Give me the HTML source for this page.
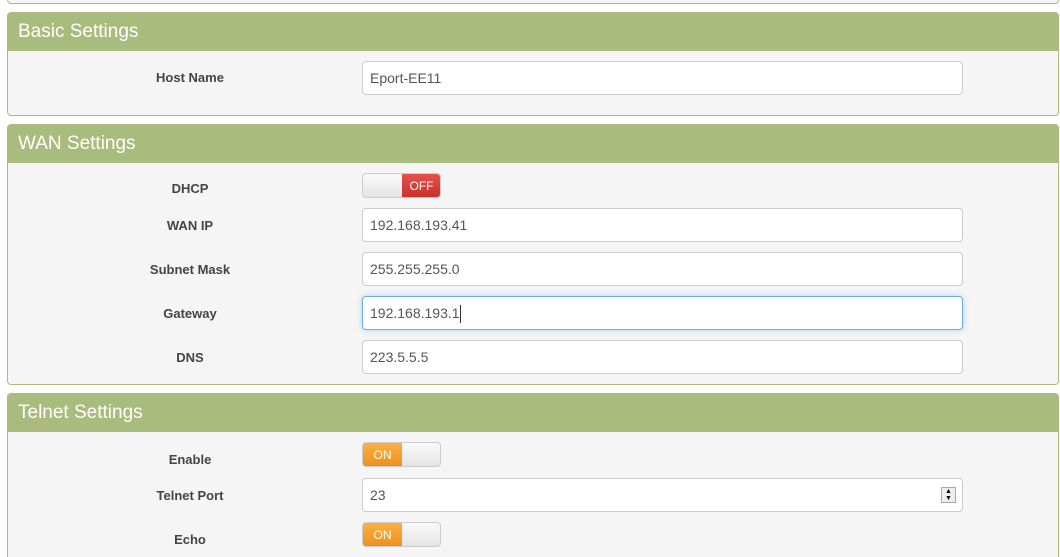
<!DOCTYPE html>
<html style="width:1060px;height:557px;overflow:hidden"><head><style>
*{box-sizing:border-box;margin:0;padding:0}
body{width:1060px;height:557px;overflow:hidden;background:#fff;font-family:"Liberation Sans",sans-serif;position:relative}
.panel{position:absolute;left:7px;width:1052px;border:1px solid #a9bb7d;border-radius:4px;background:#f5f5f5;overflow:hidden}
.hd{height:38px;background:#a9bb7d;color:#fff;font-size:19px;line-height:38px;padding-left:10px}
.lbl{position:absolute;width:380px;left:0;text-align:center;font-size:13px;font-weight:bold;color:#444}
.inp{position:absolute;left:362px;width:601px;height:34px;border:1px solid #ccc;border-radius:4px;background:#fff;font-size:14px;color:#555;line-height:32px;padding-left:7px}
.tg{position:absolute;left:362px;width:79px;height:25px;border:1px solid #ccc;border-radius:4px;overflow:hidden;background:linear-gradient(#fafafa,#e4e4e4)}
.tg span{position:absolute;top:0;width:39px;height:100%;color:#fff;font-size:12px;line-height:24px;text-align:center}
</style></head><body>
<div class="panel" style="top:-20px;height:24px"></div>
<div class="panel" style="top:12px;height:104px"><div class="hd">Basic Settings</div></div>
<div class="panel" style="top:124px;height:261px"><div class="hd">WAN Settings</div></div>
<div class="panel" style="top:393px;height:170px"><div class="hd">Telnet Settings</div></div>

<div class="lbl" style="top:70px">Host Name</div>
<div class="inp" style="top:61px">Eport-EE11</div>

<div class="lbl" style="top:181px">DHCP</div>
<div class="tg" style="top:173px"><span style="left:39px;background:linear-gradient(#e5534b,#c9302c)">OFF</span></div>
<div class="lbl" style="top:218px">WAN IP</div>
<div class="inp" style="top:208px">192.168.193.41</div>
<div class="lbl" style="top:262px">Subnet Mask</div>
<div class="inp" style="top:252px">255.255.255.0</div>
<div class="lbl" style="top:306px">Gateway</div>
<div class="inp" style="top:296px;border-color:#66afe9;box-shadow:0 0 6px rgba(102,175,233,.5)">192.168.193.1<span style="display:inline-block;width:1px;height:18px;background:#333;vertical-align:middle"></span></div>
<div class="lbl" style="top:350px">DNS</div>
<div class="inp" style="top:340px">223.5.5.5</div>

<div class="lbl" style="top:452px">Enable</div>
<div class="tg" style="top:442px"><span style="left:0;background:linear-gradient(#fbb040,#f0901e)">ON</span></div>
<div class="lbl" style="top:488px">Telnet Port</div>
<div class="inp" style="top:478px">23<div style="position:absolute;right:6px;top:8px;width:15px;height:16px;border:1px solid #aaa;background:#eee;font-size:7px;line-height:7px;text-align:center;color:#000">▲<br>▼</div></div>
<div class="lbl" style="top:532px">Echo</div>
<div class="tg" style="top:522px"><span style="left:0;background:linear-gradient(#fbb040,#f0901e)">ON</span></div>
</body></html>
